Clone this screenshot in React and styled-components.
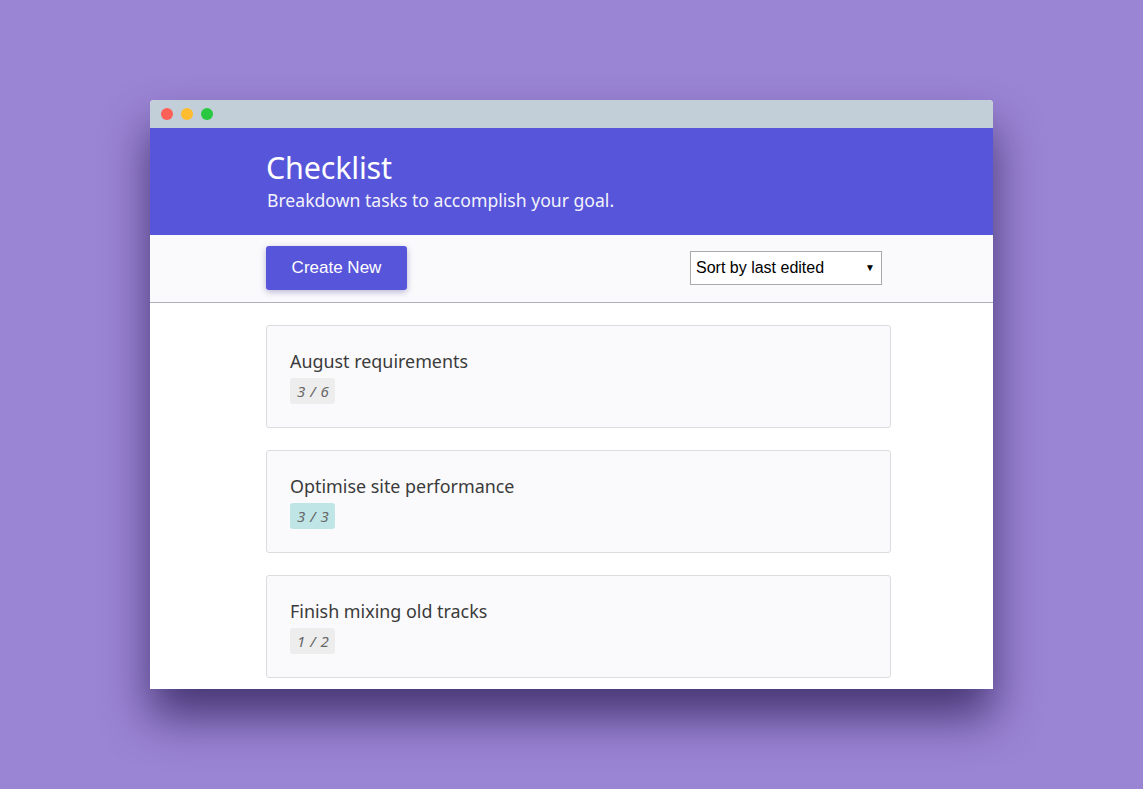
import React from "react";
import styled, { createGlobalStyle } from "styled-components";

const Global = createGlobalStyle`
  html, body { margin: 0; padding: 0; }
  body {
    background: #9a84d4;
    font-family: "Noto Sans", "Open Sans", sans-serif;
    height: 789px;
    overflow: hidden;
  }
`;

const Page = styled.div`
  padding-top: 100px;
  display: flex;
  justify-content: center;
`;

const Window = styled.div`
  width: 843px;
  height: 589px;
  background: #fff;
  border-radius: 4px 4px 0 0;
  overflow: hidden;
  display: flex;
  flex-direction: column;
  box-shadow: 0 28px 45px rgba(35, 22, 75, 0.7);
`;

const TitleBar = styled.div`
  height: 28px;
  background: #c2ced8;
  display: flex;
  align-items: center;
  gap: 8px;
  padding-left: 11px;
  flex-shrink: 0;
`;

const Dot = styled.span`
  width: 12px;
  height: 12px;
  border-radius: 50%;
  background: ${(p) => p.$c};
`;

const Header = styled.header`
  height: 107px;
  background: #5755d9;
  color: #fff;
  padding-left: 116px;
  box-sizing: border-box;
  padding-top: 20px;
  flex-shrink: 0;
`;

const Title = styled.h1`
  margin: 0;
  font-family: "Noto Sans", sans-serif;
  font-weight: 400;
  font-size: 30.5px;
  line-height: 38px;
  letter-spacing: -0.2px;
`;

const Subtitle = styled.p`
  margin: 3px 0 0;
  padding-left: 1px;
  font-size: 17.6px;
  line-height: 22px;
  color: #f3f3fb;
`;

const Toolbar = styled.div`
  height: 67px;
  background: #fafafc;
  border-bottom: 1px solid #b0b0b8;
  display: flex;
  align-items: center;
  justify-content: space-between;
  padding: 0 111px 0 116px;
  box-sizing: content-box;
  flex-shrink: 0;
`;

const Button = styled.button`
  width: 141px;
  height: 44px;
  background: #5755d9;
  color: #fff;
  border: none;
  border-radius: 3px;
  font-family: "Liberation Sans", Arial, sans-serif;
  font-size: 17px;
  box-shadow: 0 2px 6px rgba(60, 50, 140, 0.35);
  margin-top: -2px;
  cursor: pointer;
`;

const Select = styled.div`
  width: 192px;
  height: 34px;
  box-sizing: border-box;
  border: 1px solid #a9a9a9;
  background: #fff;
  display: flex;
  align-items: center;
  justify-content: space-between;
  padding: 0 6px 0 5px;
  margin-top: -2px;
  font-family: "Liberation Sans", Arial, sans-serif;
  font-size: 16px;
  color: #000;
`;

const Caret = styled.span`
  font-size: 10px;
`;

const List = styled.div`
  display: flex;
  flex-direction: column;
  gap: 22px;
  padding: 22px 0 0 116px;
`;

const Card = styled.div`
  width: 625px;
  height: 103px;
  box-sizing: border-box;
  background: #fafafc;
  border: 1px solid #dcdce0;
  border-radius: 3px;
  padding: 22px 23px;
  flex-shrink: 0;
`;

const CardTitle = styled.div`
  font-size: 17.9px;
  line-height: 26px;
  color: #3b3b3b;
`;

const Badge = styled.span`
  display: inline-block;
  margin-top: 4px;
  padding: 0 6px 0 7px;
  height: 26px;
  line-height: 26px;
  border-radius: 3px;
  background: ${(p) => (p.$done ? "#bfe5e6" : "#ededed")};
  color: #666;
  font-style: italic;
  font-size: 15px;
  letter-spacing: 0.5px;
  white-space: pre;
`;

const items = [
  { title: "August requirements", done: 3, total: 6 },
  { title: "Optimise site performance", done: 3, total: 3 },
  { title: "Finish mixing old tracks", done: 1, total: 2 },
];

export default function App() {
  return (
    <>
      <Global />
      <Page>
        <Window>
          <TitleBar>
            <Dot $c="#fe5f57" />
            <Dot $c="#febc2e" />
            <Dot $c="#28c840" />
          </TitleBar>
          <Header>
            <Title>Checklist</Title>
            <Subtitle>Breakdown tasks to accomplish your goal.</Subtitle>
          </Header>
          <Toolbar>
            <Button>Create New</Button>
            <Select>
              <span>Sort by last edited</span>
              <Caret>▼</Caret>
            </Select>
          </Toolbar>
          <List>
            {items.map((it) => (
              <Card key={it.title}>
                <CardTitle>{it.title}</CardTitle>
                <Badge $done={it.done === it.total}>
                  {`${it.done} / ${it.total}`}
                </Badge>
              </Card>
            ))}
          </List>
        </Window>
      </Page>
    </>
  );
}
